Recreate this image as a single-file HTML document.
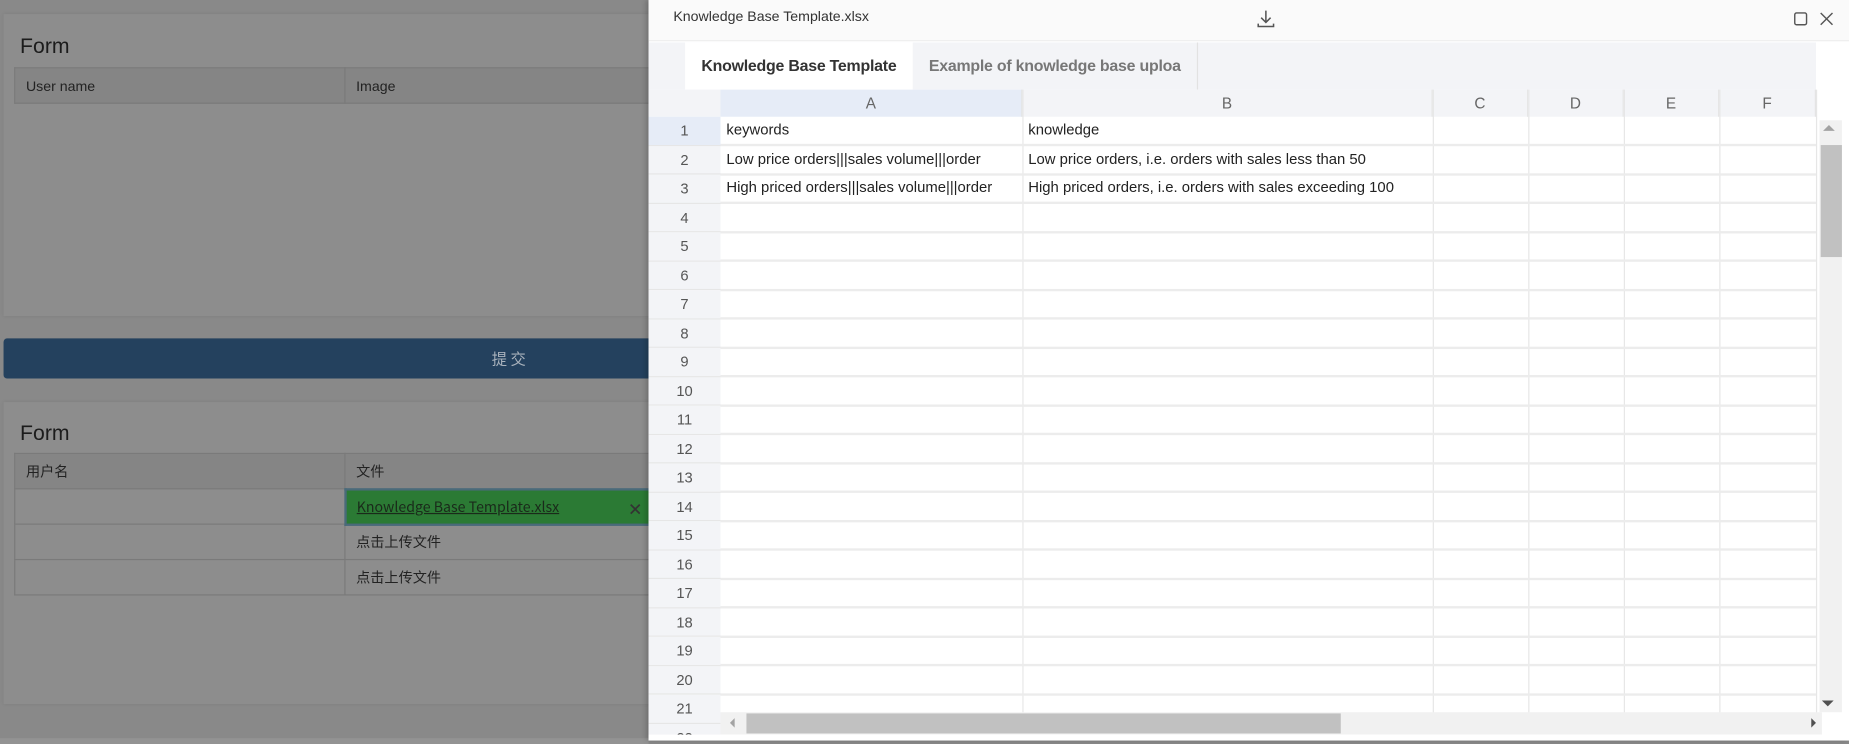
<!DOCTYPE html>
<html><head><meta charset="utf-8"><style>
*{margin:0;padding:0;box-sizing:border-box}
html,body{width:1849px;height:744px;overflow:hidden;background:#888}
#w{position:absolute;left:0;top:0;width:1568px;height:631px;transform:scale(1.17921);transform-origin:0 0;background:#898989;font-family:"Liberation Sans","Noto Sans CJK SC",sans-serif;overflow:hidden}
.card{position:absolute;left:3px;width:1000px;background:#8d8d8d;box-shadow:0 0 3px rgba(0,0,0,.08)}
.ft{position:absolute;left:17px;font-size:18px;color:#1c1c1c}
.tb{position:absolute;left:12px;width:1000px;border-collapse:collapse;font-size:12px;color:#222}
.tb td{border:1px solid #7a7a7a;height:30px;padding-left:9px}
.tb tr.h td{background:#858585}
#d{position:absolute;left:550px;top:0;width:1018px;height:628px;background:#fff;box-shadow:-2px 0 4px rgba(0,0,0,.2);overflow:hidden}
.hd{position:absolute;left:0;top:0;width:1018px;height:35px;background:#fafafa;border-bottom:1px solid #eee}
.tabs{position:absolute;left:0;top:36px;width:990px;height:40px;background:#f3f4f7}
.tab{position:absolute;top:0;height:40px;line-height:40px;font-size:13.5px;font-weight:bold;text-align:center;letter-spacing:-0.2px}
.rn{position:absolute;left:0;width:61px;text-align:center;font-size:12.5px;color:#555;background:#f3f4f7;border-bottom:1px solid #e6e6e6}
.rl{position:absolute;left:61px;width:929px;height:2px;background:#ececec}
.cl{position:absolute;top:76px;width:1px;height:530px;background:#e6e6e6}
.ch{position:absolute;top:76px;height:23px;line-height:23px;text-align:center;font-size:13px;color:#666;background:#f3f4f7;border-right:1px solid #e4e4e4}
.ct{position:absolute;left:5px;font-size:12.6px;color:#222;white-space:nowrap}
</style></head><body><div id="w">
<div class="card" style="top:12px;height:256px"></div>
<div class="ft" style="top:29px">Form</div>
<table class="tb" style="top:57px"><tr class="h"><td style="width:280px">User name</td><td>Image</td></tr></table>
<div style="position:absolute;left:3px;top:287px;width:1000px;height:34px;background:#24415e;border-radius:3px;color:#a9b2bc;font-size:13px;text-align:center;line-height:34px;font-family:'Noto Sans CJK SC',sans-serif"><span style="position:absolute;left:414px">提 交</span></div>
<div class="card" style="top:341px;height:256px"></div>
<div class="ft" style="top:357px">Form</div>
<table class="tb" style="top:384px;font-family:'Noto Sans CJK SC',sans-serif">
<tr class="h"><td style="width:280px">用户名</td><td>文件</td></tr>
<tr><td></td><td style="background:#2b7a34;border:2px solid #4a6a7a"><span style="text-decoration:underline;color:#1a2a1a">Knowledge Base Template.xlsx</span><span style="position:absolute;left:520px;color:#333;font-size:15px">✕</span></td></tr>
<tr><td></td><td>点击上传文件</td></tr>
<tr><td></td><td>点击上传文件</td></tr>
</table>
<div style="position:absolute;left:0;top:626px;width:550px;height:5px;background:#939393"></div>

<div id="d">
<div class="hd">
<div style="position:absolute;left:21px;top:7px;font-size:12px;color:#333">Knowledge Base Template.xlsx</div>
<svg style="position:absolute;left:515px;top:7px" width="17" height="17" viewBox="0 0 17 17" fill="none" stroke="#555" stroke-width="1.3"><path d="M8.5 2v10M4.5 8l4 4 4-4M2 13v2.5h13V13"/></svg>
<svg style="position:absolute;left:971px;top:10px" width="12" height="12" viewBox="0 0 12 12" fill="none" stroke="#555" stroke-width="1.2"><rect x="1" y="1" width="10" height="10" rx="1.5"/></svg>
<svg style="position:absolute;left:993px;top:10px" width="12" height="12" viewBox="0 0 12 12" fill="none" stroke="#555" stroke-width="1.2"><path d="M1 1l10 10M11 1L1 11"/></svg>
</div>
<div class="tabs">
<div class="tab" style="left:31px;width:193px;background:#fff;color:#333">Knowledge Base Template</div>
<div class="tab" style="left:224px;width:242px;color:#777;border-right:1px solid #e2e2e2">Example of knowledge base uploa</div>
</div>
<div class="ch" style="left:0;width:61px;border-right:none"></div>
<div class="ch" style="left:61px;width:256px;background:#e6ecf7">A</div>
<div class="ch" style="left:317px;width:348px">B</div>
<div class="ch" style="left:665px;width:81px">C</div>
<div class="ch" style="left:746px;width:81px">D</div>
<div class="ch" style="left:827px;width:81px">E</div>
<div class="ch" style="left:908px;width:82px">F</div>
<div class="cl" style="left:317px"></div><div class="cl" style="left:665px"></div><div class="cl" style="left:746px"></div><div class="cl" style="left:827px"></div><div class="cl" style="left:908px"></div><div class="cl" style="left:990px"></div>
<div id="rows"></div>
<div style="position:absolute;left:61px;top:99px"><span class="ct" style="top:4px">keywords</span></div>
<div style="position:absolute;left:317px;top:99px"><span class="ct" style="top:4px">knowledge</span></div>
<div style="position:absolute;left:61px;top:123px"><span class="ct" style="top:5px">Low price orders|||sales volume|||order</span></div>
<div style="position:absolute;left:317px;top:123px"><span class="ct" style="top:5px">Low price orders, i.e. orders with sales less than 50</span></div>
<div style="position:absolute;left:61px;top:148px"><span class="ct" style="top:4px">High priced orders|||sales volume|||order</span></div>
<div style="position:absolute;left:317px;top:148px"><span class="ct" style="top:4px">High priced orders, i.e. orders with sales exceeding 100</span></div>
<div style="position:absolute;left:993px;top:102px;width:19px;height:502px;background:#f1f1f1"></div>
<div style="position:absolute;left:996px;top:106px;width:0;height:0;border:5px solid transparent;border-bottom-color:#a3a3a3;border-top:none"></div>
<div style="position:absolute;left:994px;top:123px;width:18px;height:95px;background:#c1c1c1"></div>
<div style="position:absolute;left:995px;top:594px;width:0;height:0;border:5px solid transparent;border-top-color:#505050;border-bottom:none"></div>
<div style="position:absolute;left:61px;top:604px;width:934px;height:19px;background:#f1f1f1"></div>
<div style="position:absolute;left:69px;top:609px;width:0;height:0;border:4px solid transparent;border-right-color:#a3a3a3;border-left:none"></div>
<div style="position:absolute;left:83px;top:605px;width:504px;height:17px;background:#c1c1c1"></div>
<div style="position:absolute;left:986px;top:609px;width:0;height:0;border:4px solid transparent;border-left-color:#505050;border-right:none"></div>
<div style="position:absolute;left:0;top:623px;width:1018px;height:8px;background:#fff"></div>
</div>
</div>
<script>
var h='';for(var i=1;i<=22;i++){var t=99+(i-1)*24.5;h+='<div class="rn" style="top:'+t+'px;height:24.5px;line-height:24px;'+(i==1?'background:#e6ecf7':'')+'">'+i+'</div><div class="rl" style="top:'+(t+23)+'px"></div>';}
document.getElementById('rows').innerHTML=h;
</script>
</body></html>
